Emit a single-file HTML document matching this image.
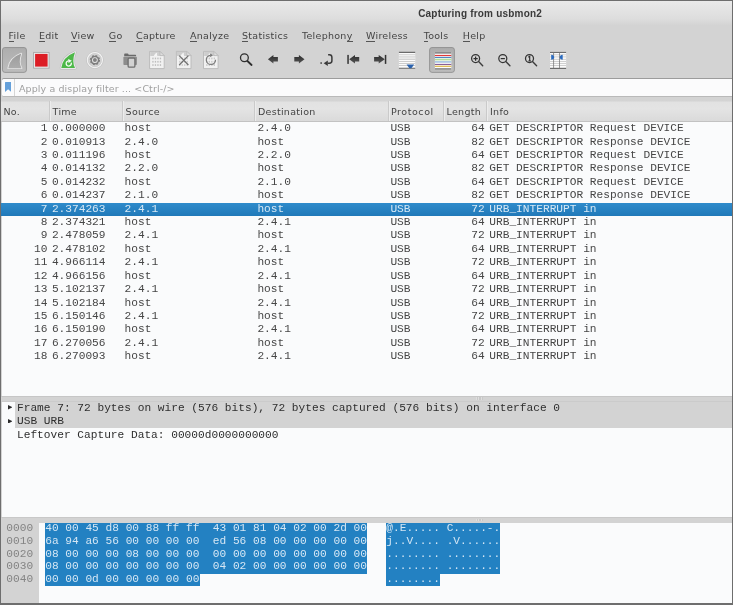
<!DOCTYPE html>
<html lang="en"><head><meta charset="utf-8"><title>Capturing from usbmon2</title>
<style>
html,body{margin:0;padding:0;}
body{width:733px;height:605px;overflow:hidden;background:#d3d3d3;position:relative;font-family:"Liberation Sans",sans-serif;}
.a{position:absolute;}
.t{position:absolute;white-space:pre;line-height:1;}
.m{font-family:"Liberation Mono",monospace;font-size:11.18px;line-height:12px;color:#464646;}
.s{font-family:"DejaVu Sans","Liberation Sans",sans-serif;font-size:9.5px;letter-spacing:0.28px;color:#444;}
u{text-decoration:none;border-bottom:1px solid #555;}
</style></head>
<body>
<div id="win" style="position:absolute;left:0;top:0;width:733px;height:605px;will-change:transform;">
<div class="a" style="left:0px;top:0px;width:733px;height:26px;background:linear-gradient(#eaeaea 1px,#e6e6e6 6px,#dddddd 19px,#d3d3d3 25.5px);"></div>
<div class="t" style="left:418.2px;top:9.2px;font-family:'Liberation Sans',sans-serif;font-weight:bold;font-size:10px;letter-spacing:0.2px;color:#3a3a3a;">Capturing from usbmon2</div>
<div class="t s" style="left:8.5px;top:31px;"><u>F</u>ile</div>
<div class="t s" style="left:39px;top:31px;"><u>E</u>dit</div>
<div class="t s" style="left:71px;top:31px;"><u>V</u>iew</div>
<div class="t s" style="left:108.8px;top:31px;"><u>G</u>o</div>
<div class="t s" style="left:136px;top:31px;"><u>C</u>apture</div>
<div class="t s" style="left:190px;top:31px;"><u>A</u>nalyze</div>
<div class="t s" style="left:242px;top:31px;"><u>S</u>tatistics</div>
<div class="t s" style="left:302px;top:31px;">Telephon<u>y</u></div>
<div class="t s" style="left:366px;top:31px;"><u>W</u>ireless</div>
<div class="t s" style="left:423.7px;top:31px;"><u>T</u>ools</div>
<div class="t s" style="left:462.8px;top:31px;"><u>H</u>elp</div>
<svg class="a" style="left:0;top:44px" width="733" height="34" viewBox="0 44 733 34"><defs><linearGradient id="bg" x1="0" y1="0" x2="0" y2="1"><stop offset="0" stop-color="#adadad"/><stop offset="1" stop-color="#bdbdbd"/></linearGradient></defs><rect x="2.5" y="47.55" width="23.9" height="24.8" rx="2.4" style="fill:url(#bg);stroke:#8e8e8e;stroke-width:0.9"/><rect x="429.6" y="47.55" width="24.8" height="24.8" rx="2.4" style="fill:url(#bg);stroke:#8e8e8e;stroke-width:0.9"/></svg>
<svg class="a" style="left:0;top:44px" width="733" height="34" viewBox="0 44 733 34">
<defs><linearGradient id="fg" x1="0" y1="0" x2="0" y2="1"><stop offset="0" stop-color="#9c9c9c"/><stop offset="1" stop-color="#acacac"/></linearGradient><linearGradient id="ag" x1="0" y1="0" x2="0" y2="1"><stop offset="0" stop-color="#2c2c2c"/><stop offset="1" stop-color="#555"/></linearGradient></defs>
<path d="M8.3 68.2Q9.62 57.98 21.2 53.6Q18.20 62.36 21.5 68.2Z" fill="#e6e6e6" stroke="#e6e6e6" stroke-width="1.8" stroke-linejoin="round"/>
<path d="M8.3 68.2Q9.62 57.98 21.2 53.6Q18.20 62.36 21.5 68.2Z" fill="url(#fg)"/>
<rect x="33.6" y="52.4" width="15.5" height="15.8" fill="#ececec" stroke="#a8a8a8" stroke-width="0.9"/>
<rect x="35.1" y="53.9" width="12.5" height="12.7" fill="#dc1d25"/>
<path d="M61.3 68.0Q62.67 56.94 75.0 52.2Q71.58 61.68 75.0 68.0Z" fill="#b8b8b8" stroke="#b8b8b8" stroke-width="3.0" stroke-linejoin="round"/>
<path d="M61.3 68.0Q62.67 56.94 75.0 52.2Q71.58 61.68 75.0 68.0Z" fill="#e9e9e9" stroke="#e9e9e9" stroke-width="2.1" stroke-linejoin="round"/>
<path d="M61.3 68.0Q62.67 56.94 75.0 52.2Q71.58 61.68 75.0 68.0Z" fill="#4db848"/>
<path d="M71.2 62.6A2.6 2.6 0 1 1 68.4 60.9" fill="none" stroke="#f4fbf3" stroke-width="1.3"/>
<path d="M68.1 58.9L71.9 60.7L68.5 63.0Z" fill="#f4fbf3"/>
<circle cx="94.9" cy="60.1" r="8.25" fill="#d2d2d2" stroke="#b6b6b6" stroke-width="0.6"/>
<circle cx="94.9" cy="60.1" r="7.45" fill="none" stroke="#f4f4f4" stroke-width="1.3"/>
<circle cx="94.9" cy="60.1" r="6.7" fill="none" stroke="#bdbdbd" stroke-width="0.4"/>
<circle cx="94.9" cy="60.1" r="4.4" fill="#7e7e7e" stroke="#7e7e7e" stroke-width="1.5" stroke-dasharray="1.78 1.676"/>
<circle cx="94.9" cy="60.1" r="2.9" fill="#e8e8e8"/>
<circle cx="94.9" cy="60.1" r="2.0" fill="#828282"/>
<path d="M124.2 56.2V54.2Q124.2 53.4 125 53.4H127.6Q128.3 53.4 128.5 54.2L128.6 54.7H135.4Q136.1 54.7 136.1 55.4V56.2Z" fill="#6a6a6a"/>
<rect x="123.4" y="56.7" width="13.5" height="8.3" rx="0.8" fill="#8c8c8c"/>
<rect x="128.1" y="58.1" width="6.8" height="9.1" rx="1.2" fill="#d2d2d2" stroke="#6e6e6e" stroke-width="1.3"/>
<path d="M149.6 51.4H160.0L164.2 55.6V68.6H149.6Z" fill="#f1f1f1" stroke="#b8b8b8" stroke-width="0.9"/><path d="M150.2 52.0H159.8L163.6 56.0H150.2Z" fill="#cdcdcd"/><path d="M160.0 51.4V55.6H164.2Z" fill="#dedede" stroke="#b4b4b4" stroke-width="0.7"/><path d="M153.79999999999998 56.0Q154.79999999999998 53.199999999999996 157.2 52.6Q156.6 54.6 157.4 56.0Z" fill="#f4f4f4"/>
<rect x="152.30" y="57.60" width="1.3" height="1.7" fill="#bdbdbd"/><rect x="154.80" y="57.60" width="1.3" height="1.7" fill="#bdbdbd"/><rect x="157.30" y="57.60" width="1.3" height="1.7" fill="#bdbdbd"/><rect x="159.80" y="57.60" width="1.3" height="1.7" fill="#bdbdbd"/><rect x="152.30" y="60.90" width="1.3" height="1.7" fill="#bdbdbd"/><rect x="154.80" y="60.90" width="1.3" height="1.7" fill="#bdbdbd"/><rect x="157.30" y="60.90" width="1.3" height="1.7" fill="#bdbdbd"/><rect x="159.80" y="60.90" width="1.3" height="1.7" fill="#bdbdbd"/><rect x="152.30" y="64.20" width="1.3" height="1.7" fill="#bdbdbd"/><rect x="154.80" y="64.20" width="1.3" height="1.7" fill="#bdbdbd"/><rect x="157.30" y="64.20" width="1.3" height="1.7" fill="#bdbdbd"/><rect x="159.80" y="64.20" width="1.3" height="1.7" fill="#bdbdbd"/>
<path d="M176.4 51.4H186.8L191.0 55.6V68.6H176.4Z" fill="#f1f1f1" stroke="#b8b8b8" stroke-width="0.9"/><path d="M177.0 52.0H186.60000000000002L190.4 56.0H177.0Z" fill="#cdcdcd"/><path d="M186.8 51.4V55.6H191.0Z" fill="#dedede" stroke="#b4b4b4" stroke-width="0.7"/><path d="M180.6 56.0Q181.6 53.199999999999996 184.0 52.6Q183.4 54.6 184.20000000000002 56.0Z" fill="#f4f4f4"/>
<rect x="179.10" y="57.60" width="1.3" height="1.7" fill="#cacaca"/><rect x="181.60" y="57.60" width="1.3" height="1.7" fill="#cacaca"/><rect x="184.10" y="57.60" width="1.3" height="1.7" fill="#cacaca"/><rect x="186.60" y="57.60" width="1.3" height="1.7" fill="#cacaca"/><rect x="179.10" y="60.90" width="1.3" height="1.7" fill="#cacaca"/><rect x="181.60" y="60.90" width="1.3" height="1.7" fill="#cacaca"/><rect x="184.10" y="60.90" width="1.3" height="1.7" fill="#cacaca"/><rect x="186.60" y="60.90" width="1.3" height="1.7" fill="#cacaca"/><rect x="179.10" y="64.20" width="1.3" height="1.7" fill="#cacaca"/><rect x="181.60" y="64.20" width="1.3" height="1.7" fill="#cacaca"/><rect x="184.10" y="64.20" width="1.3" height="1.7" fill="#cacaca"/><rect x="186.60" y="64.20" width="1.3" height="1.7" fill="#cacaca"/>
<path d="M179.2 55.6L188.4 65.0M188.4 55.6L179.2 65.0" stroke="#707070" stroke-width="1.25" fill="none"/>
<path d="M203.5 51.4H213.9L218.1 55.6V68.6H203.5Z" fill="#f1f1f1" stroke="#b8b8b8" stroke-width="0.9"/><path d="M204.1 52.0H213.70000000000002L217.5 56.0H204.1Z" fill="#cdcdcd"/><path d="M213.9 51.4V55.6H218.1Z" fill="#dedede" stroke="#b4b4b4" stroke-width="0.7"/><path d="M207.7 56.0Q208.7 53.199999999999996 211.1 52.6Q210.5 54.6 211.3 56.0Z" fill="#f4f4f4"/>
<rect x="206.20" y="57.60" width="1.3" height="1.7" fill="#c6c6c6"/><rect x="208.70" y="57.60" width="1.3" height="1.7" fill="#c6c6c6"/><rect x="211.20" y="57.60" width="1.3" height="1.7" fill="#c6c6c6"/><rect x="213.70" y="57.60" width="1.3" height="1.7" fill="#c6c6c6"/><rect x="206.20" y="60.90" width="1.3" height="1.7" fill="#c6c6c6"/><rect x="208.70" y="60.90" width="1.3" height="1.7" fill="#c6c6c6"/><rect x="211.20" y="60.90" width="1.3" height="1.7" fill="#c6c6c6"/><rect x="213.70" y="60.90" width="1.3" height="1.7" fill="#c6c6c6"/><rect x="206.20" y="64.20" width="1.3" height="1.7" fill="#c6c6c6"/><rect x="208.70" y="64.20" width="1.3" height="1.7" fill="#c6c6c6"/><rect x="211.20" y="64.20" width="1.3" height="1.7" fill="#c6c6c6"/><rect x="213.70" y="64.20" width="1.3" height="1.7" fill="#c6c6c6"/>
<path d="M215.5 59.7A4.6 4.6 0 1 1 210.4 55.3" fill="none" stroke="#7a7a7a" stroke-width="1.25"/>
<path d="M210.1 53.3L212.9 55.3L210.1 57.3Z" fill="#7a7a7a"/>
<circle cx="244.4" cy="57.75" r="3.9" fill="none" stroke="#2e2e2e" stroke-width="1.3"/>
<path d="M247.4 61.0L251.6 65.0" stroke="#2e2e2e" stroke-width="1.8" stroke-linecap="round"/>
<path d="M267.9 59.3L273.4 55.0V56.9H277.9V61.6H273.4V63.5Z" fill="url(#ag)"/>
<path d="M304.5 59.3L298.9 55.0V56.9H294.3V61.6H298.9V63.6Z" fill="url(#ag)"/>
<rect x="320.4" y="62.3" width="1.5" height="1.5" fill="#3a3a3a"/>
<path d="M323.7 63.2L327.8 60.4V65.9Z" fill="#3a3a3a"/>
<path d="M327.6 63.2H329.4Q331.9 63.2 331.9 60.8V57.4Q331.9 54.8 329.4 54.8H328.1" fill="none" stroke="#3a3a3a" stroke-width="1.5"/>
<rect x="347.3" y="54.9" width="1.5" height="9" fill="#333"/>
<path d="M349.2 59.3L355.0 55.0V57.0H359.2V61.6H355.0V63.5Z" fill="url(#ag)"/>
<rect x="384.8" y="54.9" width="1.5" height="9" fill="#333"/>
<path d="M384.8 59.3L378.7 55.0V57.0H374.1V61.6H378.7V63.5Z" fill="url(#ag)"/>
<rect x="398.9" y="52.6" width="16.3" height="15.4" fill="#fbfbfb"/>
<rect x="398.9" y="57.4" width="16.3" height="1.6" fill="#ececec"/>
<rect x="398.9" y="54.4" width="16.3" height="0.8" fill="#c2c2c2"/>
<rect x="398.9" y="56.5" width="16.3" height="0.8" fill="#c2c2c2"/>
<rect x="398.9" y="58.9" width="16.3" height="0.8" fill="#c2c2c2"/>
<rect x="398.9" y="61.0" width="16.3" height="0.8" fill="#c2c2c2"/>
<rect x="398.9" y="63.0" width="16.3" height="0.8" fill="#c2c2c2"/>
<rect x="398.9" y="65.1" width="16.3" height="0.8" fill="#c2c2c2"/>
<rect x="398.9" y="51.8" width="16.3" height="1.05" fill="#585858"/>
<rect x="398.9" y="67.7" width="16.3" height="1.2" fill="#7a7a7a"/>
<path d="M406.6 64.4H414.2L411.6 67.9Q410.4 68.8 409.2 67.9Z" fill="#2b62ad"/>
<rect x="434.9" y="52.0" width="16.4" height="17.8" fill="#fdfdfd"/>
<rect x="434.9" y="52.0" width="16.4" height="1.7" fill="#8c8c8c"/>
<rect x="434.9" y="68.1" width="16.4" height="1.7" fill="#8c8c8c"/>
<rect x="434.9" y="54.9" width="16.4" height="1.2" fill="#e23a3a"/>
<rect x="434.9" y="56.9" width="16.4" height="1.0" fill="#3f78bd"/>
<rect x="434.9" y="58.7" width="16.4" height="1.7" fill="#b1dc9a"/>
<rect x="434.9" y="61.0" width="16.4" height="1.8" fill="#adc8e4"/>
<rect x="434.9" y="63.9" width="16.4" height="1.0" fill="#7d4f8e"/>
<rect x="434.9" y="65.7" width="16.4" height="1.2" fill="#dbb548"/>
<circle cx="475.6" cy="58.6" r="4.0" fill="none" stroke="#333" stroke-width="1.25"/>
<path d="M478.6 61.6L482.70000000000005 65.7" stroke="#3c3c3c" stroke-width="1.4" stroke-linecap="round"/>
<path d="M473.5 58.6H477.70000000000005M475.6 56.5V60.7" stroke="#2e2e2e" stroke-width="1.2"/>
<circle cx="502.8" cy="58.6" r="4.0" fill="none" stroke="#333" stroke-width="1.25"/>
<path d="M505.8 61.6L509.90000000000003 65.7" stroke="#3c3c3c" stroke-width="1.4" stroke-linecap="round"/>
<path d="M500.7 58.6H504.90000000000003" stroke="#2e2e2e" stroke-width="1.2"/>
<circle cx="529.5" cy="58.6" r="4.0" fill="none" stroke="#333" stroke-width="1.25"/>
<path d="M532.5 61.6L536.6 65.7" stroke="#3c3c3c" stroke-width="1.4" stroke-linecap="round"/>
<path d="M528.3 57.2L529.7 56.3V61.0M528.3 61.0H531.0" stroke="#2e2e2e" stroke-width="1.15" fill="none"/>
<rect x="550.0" y="52.6" width="16.1" height="15.4" fill="#fbfbfb"/>
<rect x="550.0" y="54.4" width="16.1" height="0.8" fill="#c6c6c6"/>
<rect x="550.0" y="56.5" width="16.1" height="0.8" fill="#c6c6c6"/>
<rect x="550.0" y="58.9" width="16.1" height="0.8" fill="#c6c6c6"/>
<rect x="550.0" y="61.0" width="16.1" height="0.8" fill="#c6c6c6"/>
<rect x="550.0" y="63.0" width="16.1" height="0.8" fill="#c6c6c6"/>
<rect x="550.0" y="65.1" width="16.1" height="0.8" fill="#c6c6c6"/>
<rect x="550.0" y="51.9" width="16.1" height="1.05" fill="#666"/>
<rect x="550.0" y="67.8" width="16.1" height="1.2" fill="#6c6c6c"/>
<rect x="553.3" y="52.5" width="0.75" height="15.6" fill="#787878"/>
<rect x="559.0" y="52.5" width="0.75" height="15.6" fill="#787878"/>
<path d="M551.2 54.7Q554.1 55.0 554.1 57.2Q554.1 59.5 551.2 59.8Z" fill="#2b6bbf"/>
<path d="M562.7 54.7Q559.8 55.0 559.8 57.2Q559.8 59.5 562.7 59.8Z" fill="#2b6bbf"/>
</svg>
<div class="a" style="left:1.5px;top:78.2px;width:730.4px;height:18.5px;background:#b9b9b9;border-radius:2px 0 0 2px;"></div>
<div class="a" style="left:1.5px;top:78.2px;width:730.4px;height:2px;background:#9c9c9c;border-radius:2px 0 0 0;"></div>
<div class="a" style="left:2.2px;top:78.9px;width:729.7px;height:17.0px;background:#fbfbfc;border-radius:1.5px 0 0 1.5px;"></div>
<div class="a" style="left:14.3px;top:79px;width:0.9px;height:16.8px;background:#d6d6d6;"></div>
<svg class="a" style="left:4.8px;top:82.2px" width="6.2" height="9.9" viewBox="0 0 6.2 9.9"><path d="M0 0.6Q0 0 0.6 0H5.6Q6.2 0 6.2 0.6V9.9L3.1 7.2L0 9.9Z" fill="#65a0da"/></svg>
<div class="t s" style="left:19px;top:84px;letter-spacing:0.1px;color:#a0a0a0;">Apply a display filter ... &lt;Ctrl-/&gt;</div>
<div class="a" style="left:1.3px;top:99.6px;width:730.6px;height:21.5px;background:linear-gradient(#d0d0d0,#e2e2e2 12%,#e4e4e4 40%,#dadada);"></div>
<div class="a" style="left:1.3px;top:121.1px;width:730.6px;height:0.7px;background:#c2c2c2;"></div>
<div class="t s" style="left:3.4px;top:107px;">No.</div>
<div class="t s" style="left:52.6px;top:107px;">Time</div>
<div class="t s" style="left:125.6px;top:107px;">Source</div>
<div class="t s" style="left:258.0px;top:107px;">Destination</div>
<div class="t s" style="left:391.0px;top:107px;letter-spacing:0.55px;">Protocol</div>
<div class="t s" style="left:446.6px;top:107px;">Length</div>
<div class="t s" style="left:490.0px;top:107px;">Info</div>
<div class="a" style="left:48.7px;top:100.6px;width:0.8px;height:20px;background:#cacaca;"></div>
<div class="a" style="left:49.5px;top:100.6px;width:0.8px;height:20px;background:#ececec;"></div>
<div class="a" style="left:122.2px;top:100.6px;width:0.8px;height:20px;background:#cacaca;"></div>
<div class="a" style="left:123.0px;top:100.6px;width:0.8px;height:20px;background:#ececec;"></div>
<div class="a" style="left:254.2px;top:100.6px;width:0.8px;height:20px;background:#cacaca;"></div>
<div class="a" style="left:255.0px;top:100.6px;width:0.8px;height:20px;background:#ececec;"></div>
<div class="a" style="left:387.7px;top:100.6px;width:0.8px;height:20px;background:#cacaca;"></div>
<div class="a" style="left:388.5px;top:100.6px;width:0.8px;height:20px;background:#ececec;"></div>
<div class="a" style="left:442.7px;top:100.6px;width:0.8px;height:20px;background:#cacaca;"></div>
<div class="a" style="left:443.5px;top:100.6px;width:0.8px;height:20px;background:#ececec;"></div>
<div class="a" style="left:485.7px;top:100.6px;width:0.8px;height:20px;background:#cacaca;"></div>
<div class="a" style="left:486.5px;top:100.6px;width:0.8px;height:20px;background:#ececec;"></div>
<div class="a" style="left:1.5px;top:121.8px;width:731px;height:273.9px;background:#fafbfc;"></div>
<div class="t m" style="left:40.69px;top:122px;">1</div>
<div class="t m" style="left:51.9px;top:122px;">0.000000</div>
<div class="t m" style="left:124.6px;top:122px;">host</div>
<div class="t m" style="left:257.4px;top:122px;">2.4.0</div>
<div class="t m" style="left:390.4px;top:122px;">USB</div>
<div class="t m" style="left:471.18px;top:122px;">64</div>
<div class="t m" style="left:489.3px;top:122px;">GET DESCRIPTOR Request DEVICE</div>
<div class="t m" style="left:40.69px;top:136px;">2</div>
<div class="t m" style="left:51.9px;top:136px;">0.010913</div>
<div class="t m" style="left:124.6px;top:136px;">2.4.0</div>
<div class="t m" style="left:257.4px;top:136px;">host</div>
<div class="t m" style="left:390.4px;top:136px;">USB</div>
<div class="t m" style="left:471.18px;top:136px;">82</div>
<div class="t m" style="left:489.3px;top:136px;">GET DESCRIPTOR Response DEVICE</div>
<div class="t m" style="left:40.69px;top:149px;">3</div>
<div class="t m" style="left:51.9px;top:149px;">0.011196</div>
<div class="t m" style="left:124.6px;top:149px;">host</div>
<div class="t m" style="left:257.4px;top:149px;">2.2.0</div>
<div class="t m" style="left:390.4px;top:149px;">USB</div>
<div class="t m" style="left:471.18px;top:149px;">64</div>
<div class="t m" style="left:489.3px;top:149px;">GET DESCRIPTOR Request DEVICE</div>
<div class="t m" style="left:40.69px;top:162px;">4</div>
<div class="t m" style="left:51.9px;top:162px;">0.014132</div>
<div class="t m" style="left:124.6px;top:162px;">2.2.0</div>
<div class="t m" style="left:257.4px;top:162px;">host</div>
<div class="t m" style="left:390.4px;top:162px;">USB</div>
<div class="t m" style="left:471.18px;top:162px;">82</div>
<div class="t m" style="left:489.3px;top:162px;">GET DESCRIPTOR Response DEVICE</div>
<div class="t m" style="left:40.69px;top:176px;">5</div>
<div class="t m" style="left:51.9px;top:176px;">0.014232</div>
<div class="t m" style="left:124.6px;top:176px;">host</div>
<div class="t m" style="left:257.4px;top:176px;">2.1.0</div>
<div class="t m" style="left:390.4px;top:176px;">USB</div>
<div class="t m" style="left:471.18px;top:176px;">64</div>
<div class="t m" style="left:489.3px;top:176px;">GET DESCRIPTOR Request DEVICE</div>
<div class="t m" style="left:40.69px;top:189px;">6</div>
<div class="t m" style="left:51.9px;top:189px;">0.014237</div>
<div class="t m" style="left:124.6px;top:189px;">2.1.0</div>
<div class="t m" style="left:257.4px;top:189px;">host</div>
<div class="t m" style="left:390.4px;top:189px;">USB</div>
<div class="t m" style="left:471.18px;top:189px;">82</div>
<div class="t m" style="left:489.3px;top:189px;">GET DESCRIPTOR Response DEVICE</div>
<div class="a" style="left:1.3px;top:202.9px;width:730.6px;height:13.0px;background:linear-gradient(#2f8bcb,#2079b9);"></div>
<div class="t m" style="left:40.69px;top:203px;color:#d6e8f5;">7</div>
<div class="t m" style="left:51.9px;top:203px;color:#d6e8f5;">2.374263</div>
<div class="t m" style="left:124.6px;top:203px;color:#d6e8f5;">2.4.1</div>
<div class="t m" style="left:257.4px;top:203px;color:#d6e8f5;">host</div>
<div class="t m" style="left:390.4px;top:203px;color:#d6e8f5;">USB</div>
<div class="t m" style="left:471.18px;top:203px;color:#d6e8f5;">72</div>
<div class="t m" style="left:489.3px;top:203px;color:#d6e8f5;">URB_INTERRUPT in</div>
<div class="t m" style="left:40.69px;top:216px;">8</div>
<div class="t m" style="left:51.9px;top:216px;">2.374321</div>
<div class="t m" style="left:124.6px;top:216px;">host</div>
<div class="t m" style="left:257.4px;top:216px;">2.4.1</div>
<div class="t m" style="left:390.4px;top:216px;">USB</div>
<div class="t m" style="left:471.18px;top:216px;">64</div>
<div class="t m" style="left:489.3px;top:216px;">URB_INTERRUPT in</div>
<div class="t m" style="left:40.69px;top:229px;">9</div>
<div class="t m" style="left:51.9px;top:229px;">2.478059</div>
<div class="t m" style="left:124.6px;top:229px;">2.4.1</div>
<div class="t m" style="left:257.4px;top:229px;">host</div>
<div class="t m" style="left:390.4px;top:229px;">USB</div>
<div class="t m" style="left:471.18px;top:229px;">72</div>
<div class="t m" style="left:489.3px;top:229px;">URB_INTERRUPT in</div>
<div class="t m" style="left:33.98px;top:243px;">10</div>
<div class="t m" style="left:51.9px;top:243px;">2.478102</div>
<div class="t m" style="left:124.6px;top:243px;">host</div>
<div class="t m" style="left:257.4px;top:243px;">2.4.1</div>
<div class="t m" style="left:390.4px;top:243px;">USB</div>
<div class="t m" style="left:471.18px;top:243px;">64</div>
<div class="t m" style="left:489.3px;top:243px;">URB_INTERRUPT in</div>
<div class="t m" style="left:33.98px;top:256px;">11</div>
<div class="t m" style="left:51.9px;top:256px;">4.966114</div>
<div class="t m" style="left:124.6px;top:256px;">2.4.1</div>
<div class="t m" style="left:257.4px;top:256px;">host</div>
<div class="t m" style="left:390.4px;top:256px;">USB</div>
<div class="t m" style="left:471.18px;top:256px;">72</div>
<div class="t m" style="left:489.3px;top:256px;">URB_INTERRUPT in</div>
<div class="t m" style="left:33.98px;top:270px;">12</div>
<div class="t m" style="left:51.9px;top:270px;">4.966156</div>
<div class="t m" style="left:124.6px;top:270px;">host</div>
<div class="t m" style="left:257.4px;top:270px;">2.4.1</div>
<div class="t m" style="left:390.4px;top:270px;">USB</div>
<div class="t m" style="left:471.18px;top:270px;">64</div>
<div class="t m" style="left:489.3px;top:270px;">URB_INTERRUPT in</div>
<div class="t m" style="left:33.98px;top:283px;">13</div>
<div class="t m" style="left:51.9px;top:283px;">5.102137</div>
<div class="t m" style="left:124.6px;top:283px;">2.4.1</div>
<div class="t m" style="left:257.4px;top:283px;">host</div>
<div class="t m" style="left:390.4px;top:283px;">USB</div>
<div class="t m" style="left:471.18px;top:283px;">72</div>
<div class="t m" style="left:489.3px;top:283px;">URB_INTERRUPT in</div>
<div class="t m" style="left:33.98px;top:297px;">14</div>
<div class="t m" style="left:51.9px;top:297px;">5.102184</div>
<div class="t m" style="left:124.6px;top:297px;">host</div>
<div class="t m" style="left:257.4px;top:297px;">2.4.1</div>
<div class="t m" style="left:390.4px;top:297px;">USB</div>
<div class="t m" style="left:471.18px;top:297px;">64</div>
<div class="t m" style="left:489.3px;top:297px;">URB_INTERRUPT in</div>
<div class="t m" style="left:33.98px;top:310px;">15</div>
<div class="t m" style="left:51.9px;top:310px;">6.150146</div>
<div class="t m" style="left:124.6px;top:310px;">2.4.1</div>
<div class="t m" style="left:257.4px;top:310px;">host</div>
<div class="t m" style="left:390.4px;top:310px;">USB</div>
<div class="t m" style="left:471.18px;top:310px;">72</div>
<div class="t m" style="left:489.3px;top:310px;">URB_INTERRUPT in</div>
<div class="t m" style="left:33.98px;top:323px;">16</div>
<div class="t m" style="left:51.9px;top:323px;">6.150190</div>
<div class="t m" style="left:124.6px;top:323px;">host</div>
<div class="t m" style="left:257.4px;top:323px;">2.4.1</div>
<div class="t m" style="left:390.4px;top:323px;">USB</div>
<div class="t m" style="left:471.18px;top:323px;">64</div>
<div class="t m" style="left:489.3px;top:323px;">URB_INTERRUPT in</div>
<div class="t m" style="left:33.98px;top:337px;">17</div>
<div class="t m" style="left:51.9px;top:337px;">6.270056</div>
<div class="t m" style="left:124.6px;top:337px;">2.4.1</div>
<div class="t m" style="left:257.4px;top:337px;">host</div>
<div class="t m" style="left:390.4px;top:337px;">USB</div>
<div class="t m" style="left:471.18px;top:337px;">72</div>
<div class="t m" style="left:489.3px;top:337px;">URB_INTERRUPT in</div>
<div class="t m" style="left:33.98px;top:350px;">18</div>
<div class="t m" style="left:51.9px;top:350px;">6.270093</div>
<div class="t m" style="left:124.6px;top:350px;">host</div>
<div class="t m" style="left:257.4px;top:350px;">2.4.1</div>
<div class="t m" style="left:390.4px;top:350px;">USB</div>
<div class="t m" style="left:471.18px;top:350px;">64</div>
<div class="t m" style="left:489.3px;top:350px;">URB_INTERRUPT in</div>
<div class="a" style="left:1.3px;top:395.6px;width:730.6px;height:6.0px;background:#d3d3d3;"></div>
<div class="a" style="left:1.3px;top:395.6px;width:730.6px;height:0.8px;background:#c6c6c6;"></div>
<div class="a" style="left:476.4px;top:397.4px;width:0.7px;height:2.6px;background:#dedede;"></div>
<div class="a" style="left:477.2px;top:397.4px;width:0.6px;height:2.6px;background:#c8c8c8;"></div>
<div class="a" style="left:478.0px;top:397.4px;width:0.7px;height:2.6px;background:#dedede;"></div>
<div class="a" style="left:478.8px;top:397.4px;width:0.6px;height:2.6px;background:#c8c8c8;"></div>
<div class="a" style="left:479.6px;top:397.4px;width:0.7px;height:2.6px;background:#dedede;"></div>
<div class="a" style="left:480.4px;top:397.4px;width:0.6px;height:2.6px;background:#c8c8c8;"></div>
<div class="a" style="left:481.2px;top:397.4px;width:0.7px;height:2.6px;background:#dedede;"></div>
<div class="a" style="left:482.0px;top:397.4px;width:0.6px;height:2.6px;background:#c8c8c8;"></div>
<div class="a" style="left:1.3px;top:401.1px;width:730.6px;height:0.6px;background:#cbcbcb;"></div>
<div class="a" style="left:1.5px;top:401.6px;width:731px;height:115.39999999999998px;background:#fafbfc;"></div>
<div class="a" style="left:15.1px;top:401.6px;width:716.8px;height:26.4px;background:#d3d3d3;"></div>
<div class="t m" style="left:17.0px;top:402px;color:#2e2e2e;">Frame 7: 72 bytes on wire (576 bits), 72 bytes captured (576 bits) on interface 0</div>
<svg class="a" style="left:7.8px;top:405.4px" width="4.5" height="4.6" viewBox="0 0 4.5 4.6"><path d="M0 0L4.5 2.3L0 4.6Z" fill="#2a2a2a"/></svg>
<div class="t m" style="left:17.0px;top:415px;color:#2e2e2e;">USB URB</div>
<svg class="a" style="left:7.8px;top:418.9px" width="4.5" height="4.6" viewBox="0 0 4.5 4.6"><path d="M0 0L4.5 2.3L0 4.6Z" fill="#2a2a2a"/></svg>
<div class="t m" style="left:17.0px;top:429px;color:#2e2e2e;">Leftover Capture Data: 00000d0000000000</div>
<div class="a" style="left:1.3px;top:517.2px;width:730.6px;height:5.4px;background:#d3d3d3;"></div>
<div class="a" style="left:1.3px;top:517.2px;width:730.6px;height:0.8px;background:#c8c8c8;"></div>
<div class="a" style="left:476.4px;top:518.8px;width:0.7px;height:2.6px;background:#dedede;"></div>
<div class="a" style="left:477.2px;top:518.8px;width:0.6px;height:2.6px;background:#c8c8c8;"></div>
<div class="a" style="left:478.0px;top:518.8px;width:0.7px;height:2.6px;background:#dedede;"></div>
<div class="a" style="left:478.8px;top:518.8px;width:0.6px;height:2.6px;background:#c8c8c8;"></div>
<div class="a" style="left:479.6px;top:518.8px;width:0.7px;height:2.6px;background:#dedede;"></div>
<div class="a" style="left:480.4px;top:518.8px;width:0.6px;height:2.6px;background:#c8c8c8;"></div>
<div class="a" style="left:481.2px;top:518.8px;width:0.7px;height:2.6px;background:#dedede;"></div>
<div class="a" style="left:482.0px;top:518.8px;width:0.6px;height:2.6px;background:#c8c8c8;"></div>
<div class="a" style="left:1.3px;top:522.6px;width:730.6px;height:80.79999999999995px;background:#fafbfc;"></div>
<div class="a" style="left:1.3px;top:522.6px;width:37.7px;height:80.79999999999995px;background:#d3d3d3;"></div>
<div class="t m" style="left:6.3px;top:522px;color:#848484;">0000</div>
<div class="a" style="left:45.1px;top:522.7px;width:322.13px;height:12.77px;background:#2381c2;"></div>
<div class="a" style="left:385.9px;top:522.7px;width:114.45px;height:12.77px;background:#2381c2;"></div>
<div class="t m" style="left:45.2px;top:522px;color:#d4e6f4;">40 00 45 d8 00 88 ff ff  43 01 81 04 02 00 2d 00</div>
<div class="t m" style="left:386.3px;top:522px;color:#d4e6f4;">@.E..... C.....-.</div>
<div class="t m" style="left:6.3px;top:535px;color:#848484;">0010</div>
<div class="a" style="left:45.1px;top:535.42px;width:322.13px;height:12.77px;background:#2381c2;"></div>
<div class="a" style="left:385.9px;top:535.42px;width:114.45px;height:12.77px;background:#2381c2;"></div>
<div class="t m" style="left:45.2px;top:535px;color:#d4e6f4;">6a 94 a6 56 00 00 00 00  ed 56 08 00 00 00 00 00</div>
<div class="t m" style="left:386.3px;top:535px;color:#d4e6f4;">j..V.... .V......</div>
<div class="t m" style="left:6.3px;top:548px;color:#848484;">0020</div>
<div class="a" style="left:45.1px;top:548.14px;width:322.13px;height:12.77px;background:#2381c2;"></div>
<div class="a" style="left:385.9px;top:548.14px;width:114.45px;height:12.77px;background:#2381c2;"></div>
<div class="t m" style="left:45.2px;top:548px;color:#d4e6f4;">08 00 00 00 08 00 00 00  00 00 00 00 00 00 00 00</div>
<div class="t m" style="left:386.3px;top:548px;color:#d4e6f4;">........ ........</div>
<div class="t m" style="left:6.3px;top:560px;color:#848484;">0030</div>
<div class="a" style="left:45.1px;top:560.86px;width:322.13px;height:12.77px;background:#2381c2;"></div>
<div class="a" style="left:385.9px;top:560.86px;width:114.45px;height:12.77px;background:#2381c2;"></div>
<div class="t m" style="left:45.2px;top:560px;color:#d4e6f4;">08 00 00 00 00 00 00 00  04 02 00 00 00 00 00 00</div>
<div class="t m" style="left:386.3px;top:560px;color:#d4e6f4;">........ ........</div>
<div class="t m" style="left:6.3px;top:573px;color:#848484;">0040</div>
<div class="a" style="left:45.1px;top:573.58px;width:154.41px;height:12.37px;background:#2381c2;"></div>
<div class="a" style="left:385.9px;top:573.58px;width:54.07px;height:12.37px;background:#2381c2;"></div>
<div class="t m" style="left:45.2px;top:573px;color:#d4e6f4;">00 00 0d 00 00 00 00 00</div>
<div class="t m" style="left:386.3px;top:573px;color:#d4e6f4;">........</div>
<div class="a" style="left:0px;top:0px;width:733px;height:1.25px;background:#6e6e6e;"></div>
<div class="a" style="left:0px;top:0px;width:1.25px;height:605px;background:#6e6e6e;"></div>
<div class="a" style="left:731.7px;top:0px;width:1.3px;height:605px;background:#6e6e6e;"></div>
<div class="a" style="left:0px;top:603.3px;width:733px;height:1.7px;background:#6e6e6e;"></div>
</div>
</body></html>
